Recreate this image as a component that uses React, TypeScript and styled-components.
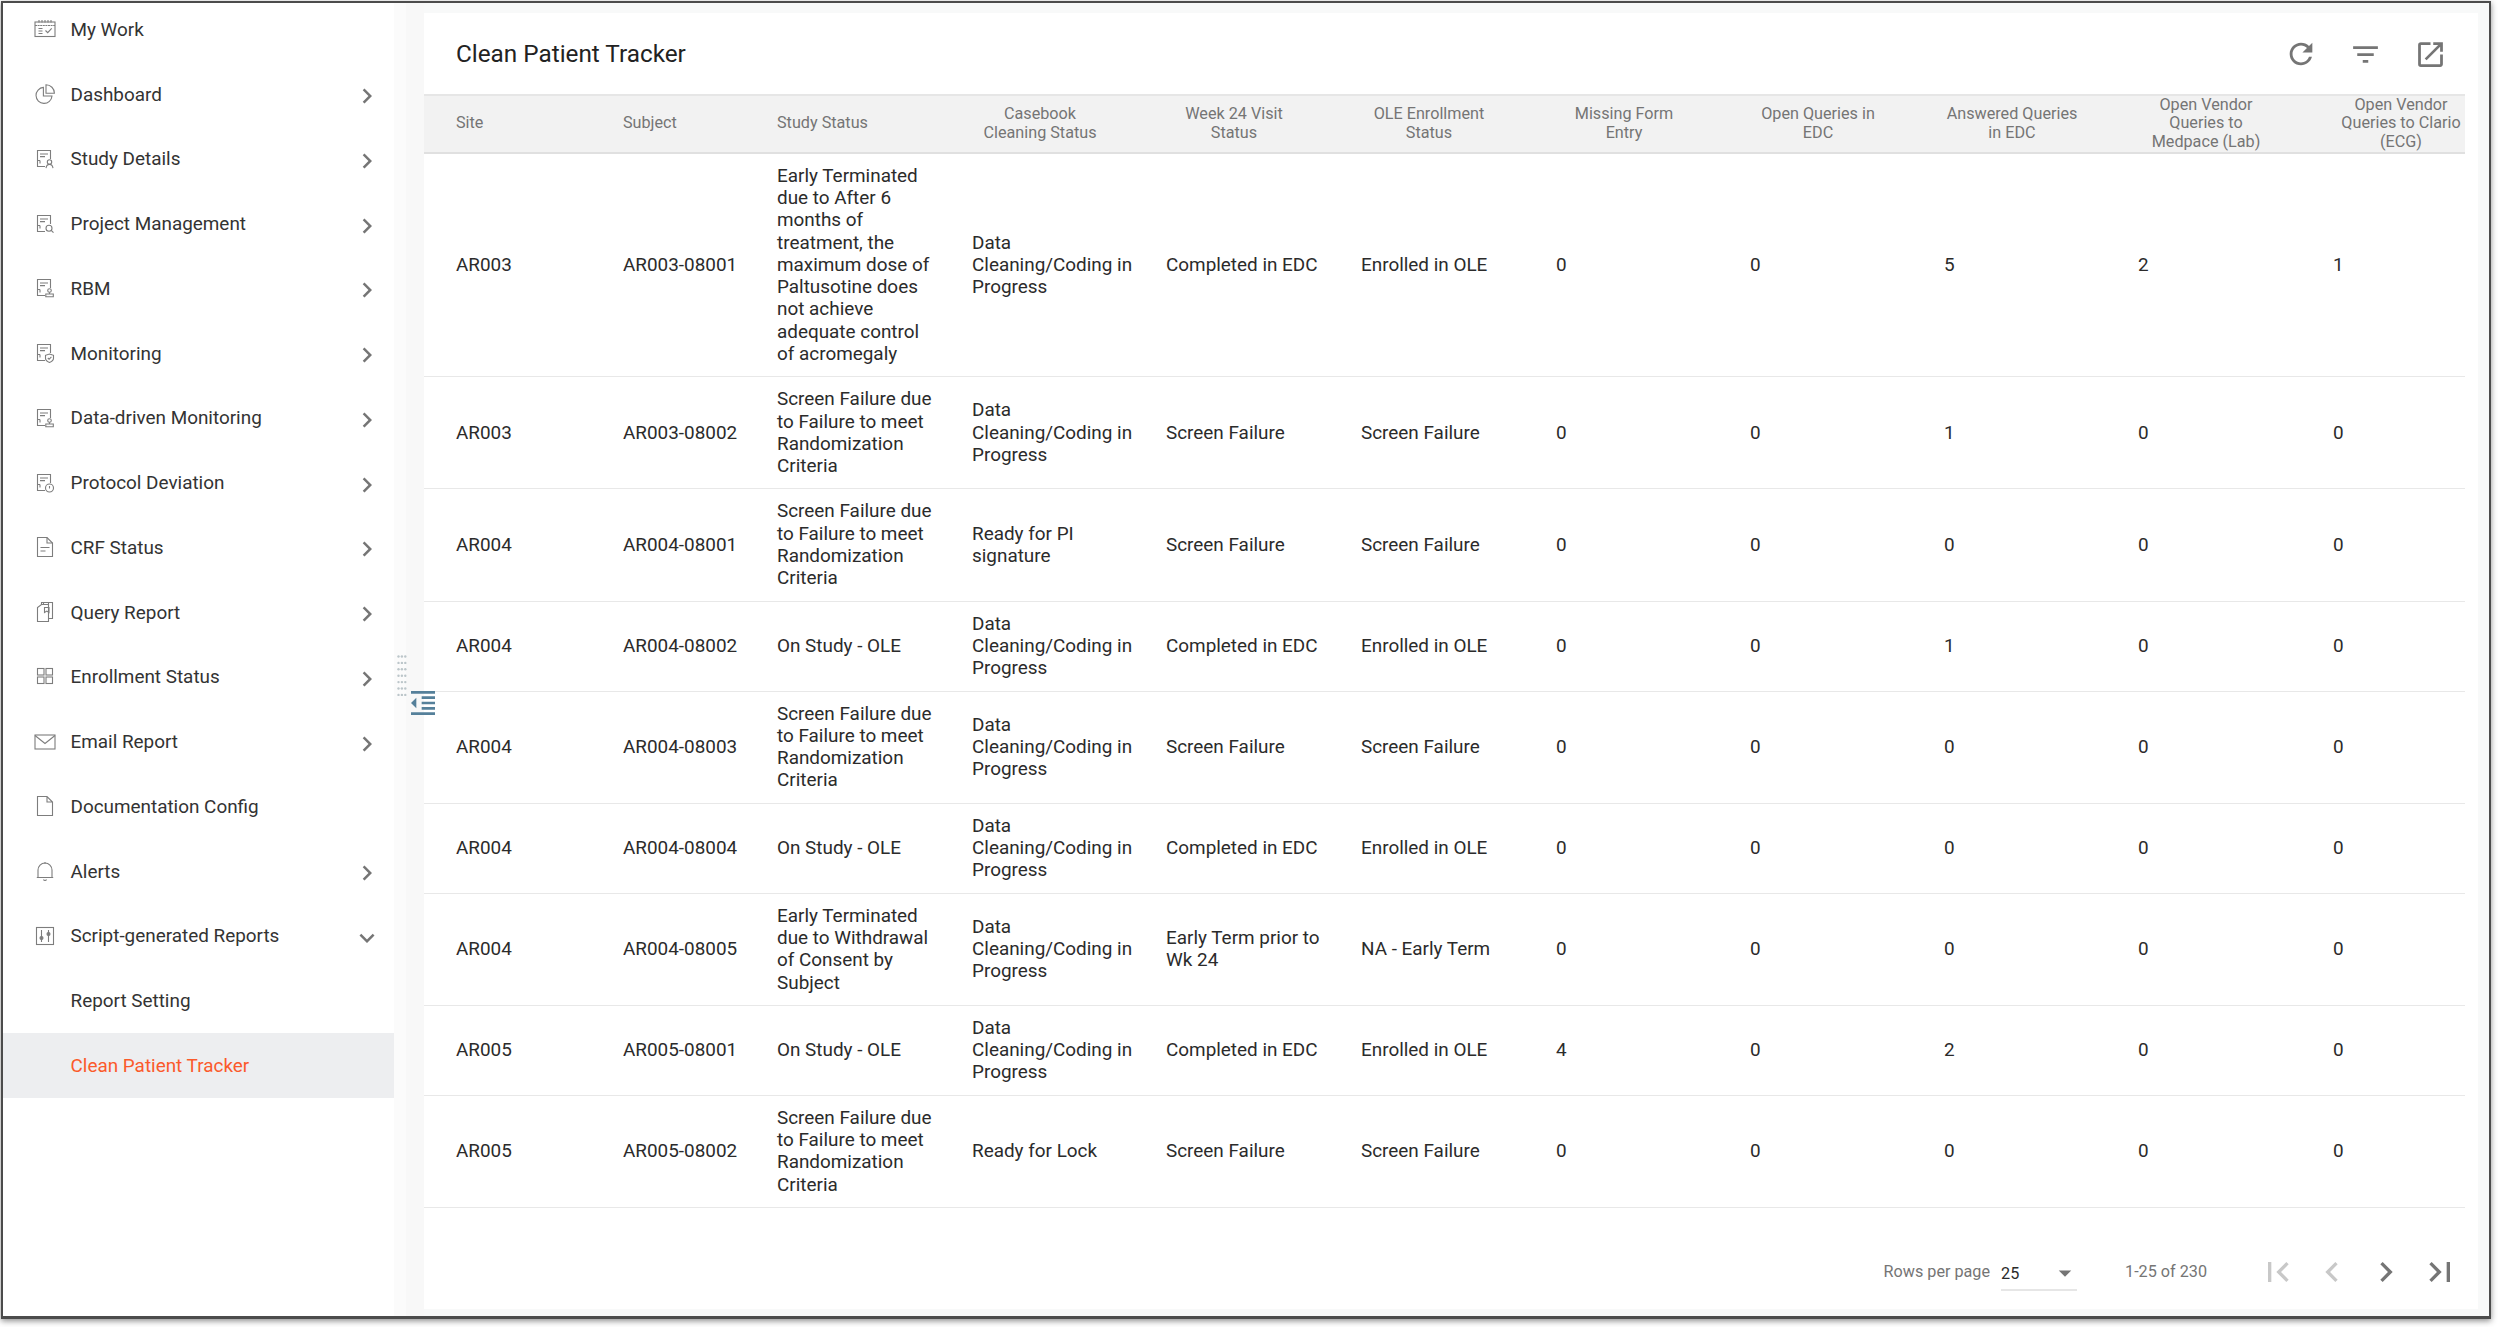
import type { ReactNode } from 'react';
import styled, { createGlobalStyle } from 'styled-components';
import {
  MdRefresh,
  MdFilterList,
  MdOpenInNew,
  MdFirstPage,
  MdLastPage,
  MdChevronLeft,
  MdChevronRight,
  MdExpandMore,
  MdFormatIndentDecrease,
  MdArrowDropDown,
} from 'react-icons/md';

const GlobalStyle = createGlobalStyle`
  html, body {
    margin: 0;
    padding: 0;
    background: #fff;
    font-family: Roboto, 'Liberation Sans', sans-serif;
  }
`;

const Page = styled.div`
  width: 2500px;
  height: 1327px;
  padding: 1px 0 0 1px;
  box-sizing: border-box;
  overflow: hidden;
  background: #fff;
`;

const Frame = styled.div`
  position: relative;
  width: 2490px;
  height: 1318px;
  box-sizing: border-box;
  display: flex;
  border: 2.5px solid #4c4c4c;
  border-bottom-width: 3px;
  background: #f8f9f9;
  box-shadow: 0 2px 6px rgba(0, 0, 0, 0.45);
`;

const Sidebar = styled.nav`
  width: 391px;
  flex-shrink: 0;
  overflow: hidden;
  background: #fff;
`;

const Menu = styled.ul`
  list-style: none;
  margin: -6px 0 0;
  padding: 0;
`;

const MenuItem = styled.li<{ $active?: boolean }>`
  height: 64.75px;
  display: flex;
  align-items: center;
  padding: 0 12px 0 67.5px;
  position: relative;
  font-size: 18.9px;
  color: ${(p) => (p.$active ? '#fb5a2b' : '#333')};
  background: ${(p) => (p.$active ? '#edeef0' : 'transparent')};
`;

const MenuIcon = styled.svg`
  position: absolute;
  left: 31px;
  top: 50%;
  width: 22px;
  height: 22px;
  margin-top: -11px;
  fill: none;
  stroke: #7d7d7d;
  stroke-width: 1.1;
`;

const MenuLabel = styled.span`
  flex: 1;
`;

const Chevron = styled(MdChevronRight)`
  color: #757575;
  margin-top: 4px;
`;

const OpenChevron = styled(MdExpandMore)`
  color: #757575;
  margin-top: 4px;
`;

const Gutter = styled.div`
  width: 30px;
  flex-shrink: 0;
  background: linear-gradient(90deg, #fbfbfb 0 40%, #f8f8f8 40%);
`;

const DragDots = styled.svg`
  position: absolute;
  left: 394px;
  top: 652px;
  width: 10px;
  height: 42px;
  fill: #bcc6ca;
`;

const CollapseIcon = styled(MdFormatIndentDecrease)`
  position: absolute;
  left: 404px;
  top: 684px;
  color: #55809a;
`;

const Panel = styled.main`
  width: 2054px;
  margin-top: 9.5px;
  height: 1296px;
  display: flex;
  flex-direction: column;
  background: #fff;
`;

const PanelHeader = styled.header`
  height: 81px;
  flex-shrink: 0;
  display: flex;
  align-items: center;
  padding: 0 15px 0 32px;
`;

const Title = styled.h1`
  flex: 1;
  margin: 0;
  font-size: 24.3px;
  font-weight: 400;
  color: #222;
`;

const ToolButton = styled.button`
  width: 65px;
  height: 40px;
  margin-top: 2px;
  padding: 0;
  border: none;
  background: none;
  color: #757575;
  display: flex;
  align-items: center;
  justify-content: center;
`;

const TableWrap = styled.div`
  width: 2041px;
  overflow: hidden;
`;

const Table = styled.table`
  width: 2041px;
  table-layout: fixed;
  border-collapse: collapse;
`;

const HeaderRow = styled.tr`
  height: 58px;
  background: #f2f2f2;
  border-top: 2px solid #e6e6e6;
  border-bottom: 2px solid #e0e0e0;
`;

const HeaderCell = styled.th`
  padding: 0;
  font-size: 16.2px;
  font-weight: 400;
  line-height: 18.7px;
  color: #757575;
  text-align: left;
  vertical-align: middle;
  &:first-child {
    padding-left: 32px;
  }
`;

const HeaderText = styled.div<{ $center?: boolean }>`
  width: ${(p) => (p.$center ? '136px' : 'auto')};
  text-align: ${(p) => (p.$center ? 'center' : 'left')};
`;

const BodyRow = styled.tr`
  border-bottom: 1.5px solid #e8e8e8;
`;

const BodyCell = styled.td`
  padding: 11px 30px 11px 0;
  font-size: 18.9px;
  line-height: 22.3px;
  color: #2b2b2b;
  vertical-align: middle;
  &:first-child {
    padding-left: 32px;
  }
  &:nth-child(3) {
    padding-right: 34px;
  }
`;

const Footer = styled.footer`
  flex: 1;
  display: flex;
  align-items: flex-end;
  justify-content: flex-end;
  padding: 0 18px 17px 0;
  font-size: 16.2px;
  color: #757575;
`;

const FooterGroup = styled.div`
  height: 40px;
  display: flex;
  align-items: center;
`;

const RowsSelect = styled.div`
  width: 76px;
  height: 33px;
  margin: 5px 48px 0 11px;
  box-sizing: border-box;
  display: flex;
  align-items: center;
  justify-content: space-between;
  border-bottom: 2px solid #e6e6e6;
  color: #2b2b2b;
`;

const SelectArrow = styled(MdArrowDropDown)`
  color: #757575;
  margin-right: -3px;
`;

const PageLabel = styled.span`
  margin-right: 37px;
`;

const PageButton = styled.button<{ $off?: boolean }>`
  width: 40px;
  height: 40px;
  margin-left: 14px;
  padding: 0;
  border: none;
  background: none;
  color: ${(p) => (p.$off ? '#c8c8c8' : '#757575')};
  display: flex;
  align-items: center;
  justify-content: center;
`;

type IconKind =
  | 'work'
  | 'pie'
  | 'person'
  | 'search'
  | 'stamp'
  | 'shield'
  | 'clock'
  | 'doc'
  | 'docs'
  | 'grid'
  | 'mail'
  | 'blank'
  | 'bell'
  | 'sliders';

// doc outline with the bottom right corner cut away for a small badge
const badgeDoc = (badge: ReactNode) => (
  <>
    <path d="M11 18.5H3.5v-16h13v8.5" />
    <path d="M6 6h8M6 8.6h5M3.5 12.5h2.5M6 12.5v3" />
    {badge}
  </>
);

const iconParts: Record<IconKind, ReactNode> = {
  work: (
    <>
      <rect x="1" y="4" width="20" height="14.5" />
      <path d="M1 7.5h20M5 2v3M8 2v3M11 2v3M14 2v3M17 2v3" strokeDasharray="2 0.6" />
      <path d="M4.5 10.5h4M4.5 13h4M4.5 15.5h4M11.5 12.5l2.2 2.2 4-4.4" />
    </>
  ),
  pie: (
    <>
      <path d="M9.4 4.4a8 8 0 1 0 8.6 8.6h-8.6z" />
      <path d="M12 1.8a8.4 8.4 0 0 1 8.4 8.4H12z" />
    </>
  ),
  person: badgeDoc(
    <>
      <circle cx="15.5" cy="14" r="2.2" />
      <path d="M12 20.2c.4-2.8 1.8-3.8 3.5-3.8s3.100 1 3.500 3.800" />
    </>
  ),
  search: badgeDoc(
    <>
      <circle cx="15" cy="15.200" r="3" />
      <path d="M17.200 17.400l2.300 2.300" />
    </>
  ),
  stamp: badgeDoc(
    <>
      <circle cx="15.500" cy="13.500" r="1.800" />
      <path d="M15.500 15.300v1.500M11.800 17h7.500v2.700h-7.500z" />
    </>
  ),
  shield: badgeDoc(
    <path d="M15.500 12l4 1.300v3c0 2-1.600 3.300-4 4.200-2.400-.9-4-2.200-4-4.200v-3zM13.800 16l1.300 1.300 2.300-2.400" />
  ),
  clock: badgeDoc(
    <>
      <circle cx="15.500" cy="16" r="4" />
      <path d="M15.500 14v2.500" />
    </>
  ),
  doc: (
    <>
      <path d="M3.500 20.500V1.500h9.500l5.500 5.500v13.500z" />
      <path d="M13 1.500V7h5.500M6.500 11.500h9M6.500 15h5" />
    </>
  ),
  docs: (
    <>
      <path d="M3.500 20.500V6.500l4-3h7v17z" />
      <path d="M7.500 3.500V1.500h11v16h-4M9.500 1v3M14.500 1v3M10.500 6.500h4.500v5l-2.200-1.400-2.300 1.400z" />
    </>
  ),
  grid: (
    <>
      <rect x="3.500" y="2.500" width="6.500" height="6.500" />
      <rect x="12" y="2.500" width="6.500" height="6.500" />
      <rect x="3.500" y="11" width="6.500" height="6.500" />
      <rect x="12" y="11" width="6.500" height="6.500" />
    </>
  ),
  mail: (
    <>
      <rect x="1" y="4" width="20" height="14" />
      <path d="M1 4.500l10 8 10-8" />
    </>
  ),
  blank: <path d="M3.500 20.500V1.500h9.500l5.500 5.500v13.500zM13 1.500V7h5.500" />,
  bell: (
    <>
      <path d="M4 17.500v-7.500a7 7 0 0 1 14 0v7.500zM2.800 17.500h16.400" />
      <path d="M9.500 19.500a1.600 1.600 0 0 0 3 0M10 3h2" />
    </>
  ),
  sliders: (
    <>
      <rect x="2.500" y="2.500" width="17" height="17" />
      <path d="M7.500 5v12M14.500 5v12" />
      <circle cx="7.500" cy="13" r="1.500" fill="#7d7d7d" />
      <circle cx="14.500" cy="9" r="1.500" fill="#7d7d7d" />
    </>
  ),
};

const menu: { label: string; icon?: IconKind; arrow?: 'right' | 'down'; active?: boolean }[] = [
  { label: 'My Work', icon: 'work' },
  { label: 'Dashboard', icon: 'pie', arrow: 'right' },
  { label: 'Study Details', icon: 'person', arrow: 'right' },
  { label: 'Project Management', icon: 'search', arrow: 'right' },
  { label: 'RBM', icon: 'stamp', arrow: 'right' },
  { label: 'Monitoring', icon: 'shield', arrow: 'right' },
  { label: 'Data-driven Monitoring', icon: 'stamp', arrow: 'right' },
  { label: 'Protocol Deviation', icon: 'clock', arrow: 'right' },
  { label: 'CRF Status', icon: 'doc', arrow: 'right' },
  { label: 'Query Report', icon: 'docs', arrow: 'right' },
  { label: 'Enrollment Status', icon: 'grid', arrow: 'right' },
  { label: 'Email Report', icon: 'mail', arrow: 'right' },
  { label: 'Documentation Config', icon: 'blank' },
  { label: 'Alerts', icon: 'bell', arrow: 'right' },
  { label: 'Script-generated Reports', icon: 'sliders', arrow: 'down' },
  { label: 'Report Setting' },
  { label: 'Clean Patient Tracker', active: true },
];

const columns: { label: string; width: number; center?: boolean }[] = [
  { label: 'Site', width: 199 },
  { label: 'Subject', width: 154 },
  { label: 'Study Status', width: 195 },
  { label: 'Casebook Cleaning Status', width: 194, center: true },
  { label: 'Week 24 Visit Status', width: 195, center: true },
  { label: 'OLE Enrollment Status', width: 195, center: true },
  { label: 'Missing Form Entry', width: 194, center: true },
  { label: 'Open Queries in EDC', width: 194, center: true },
  { label: 'Answered Queries in EDC', width: 194, center: true },
  { label: 'Open Vendor Queries to Medpace (Lab)', width: 195, center: true },
  { label: 'Open Vendor Queries to Clario (ECG)', width: 195, center: true },
];

const FAILURE = 'Screen Failure due to Failure to meet Randomization Criteria';
const CODING = 'Data Cleaning/Coding in Progress';
const DONE = 'Completed in EDC';
const OLE = 'Enrolled in OLE';
const SF = 'Screen Failure';
const ON_STUDY = 'On Study - OLE';

const rows: (string | number)[][] = [
  [
    'AR003',
    'AR003-08001',
    'Early Terminated due to After 6 months of treatment, the maximum dose of Paltusotine does not achieve adequate control of acromegaly',
    CODING, DONE, OLE, 0, 0, 5, 2, 1,
  ],
  ['AR003', 'AR003-08002', FAILURE, CODING, SF, SF, 0, 0, 1, 0, 0],
  ['AR004', 'AR004-08001', FAILURE, 'Ready for PI signature', SF, SF, 0, 0, 0, 0, 0],
  ['AR004', 'AR004-08002', ON_STUDY, CODING, DONE, OLE, 0, 0, 1, 0, 0],
  ['AR004', 'AR004-08003', FAILURE, CODING, SF, SF, 0, 0, 0, 0, 0],
  ['AR004', 'AR004-08004', ON_STUDY, CODING, DONE, OLE, 0, 0, 0, 0, 0],
  [
    'AR004',
    'AR004-08005',
    'Early Terminated due to Withdrawal of Consent by Subject',
    CODING, 'Early Term prior to Wk 24', 'NA - Early Term', 0, 0, 0, 0, 0,
  ],
  ['AR005', 'AR005-08001', ON_STUDY, CODING, DONE, OLE, 4, 0, 2, 0, 0],
  ['AR005', 'AR005-08002', FAILURE, 'Ready for Lock', SF, SF, 0, 0, 0, 0, 0],
];

const dots = Array.from({ length: 21 }, (_, i) => ({
  x: 1.5 + (i % 3) * 3.4,
  y: 1.5 + Math.floor(i / 3) * 6.4,
}));

export default function App() {
  return (
    <Page>
      <GlobalStyle />
      <Frame>
        <Sidebar>
          <Menu>
            {menu.map((item) => (
              <MenuItem key={item.label} $active={item.active}>
                {item.icon && <MenuIcon viewBox="0 0 22 22">{iconParts[item.icon]}</MenuIcon>}
                <MenuLabel>{item.label}</MenuLabel>
                {item.arrow === 'right' && <Chevron size={30} />}
                {item.arrow === 'down' && <OpenChevron size={30} />}
              </MenuItem>
            ))}
          </Menu>
        </Sidebar>
        <Gutter />
        <Panel>
          <PanelHeader>
            <Title>Clean Patient Tracker</Title>
            <ToolButton><MdRefresh size={34} /></ToolButton>
            <ToolButton><MdFilterList size={33} /></ToolButton>
            <ToolButton><MdOpenInNew size={33} /></ToolButton>
          </PanelHeader>
          <TableWrap>
            <Table>
              <colgroup>
                {columns.map((c) => (
                  <col key={c.label} style={{ width: c.width }} />
                ))}
              </colgroup>
              <thead>
                <HeaderRow>
                  {columns.map((c) => (
                    <HeaderCell key={c.label}>
                      <HeaderText $center={c.center}>{c.label}</HeaderText>
                    </HeaderCell>
                  ))}
                </HeaderRow>
              </thead>
              <tbody>
                {rows.map((row) => (
                  <BodyRow key={row[1]}>
                    {row.map((value, i) => (
                      <BodyCell key={i}>{value}</BodyCell>
                    ))}
                  </BodyRow>
                ))}
              </tbody>
            </Table>
          </TableWrap>
          <Footer>
            <FooterGroup>
              <span>Rows per page</span>
              <RowsSelect>
                25
                <SelectArrow size={30} />
              </RowsSelect>
              <PageLabel>1-25 of 230</PageLabel>
              <PageButton $off><MdFirstPage size={40} /></PageButton>
              <PageButton $off><MdChevronLeft size={40} /></PageButton>
              <PageButton><MdChevronRight size={40} /></PageButton>
              <PageButton><MdLastPage size={40} /></PageButton>
            </FooterGroup>
          </Footer>
        </Panel>
        <DragDots viewBox="0 0 10 42">
          {dots.map((d) => (
            <circle key={`${d.x}-${d.y}`} cx={d.x} cy={d.y} r={1.2} />
          ))}
        </DragDots>
        <CollapseIcon size={32} />
      </Frame>
    </Page>
  );
}
